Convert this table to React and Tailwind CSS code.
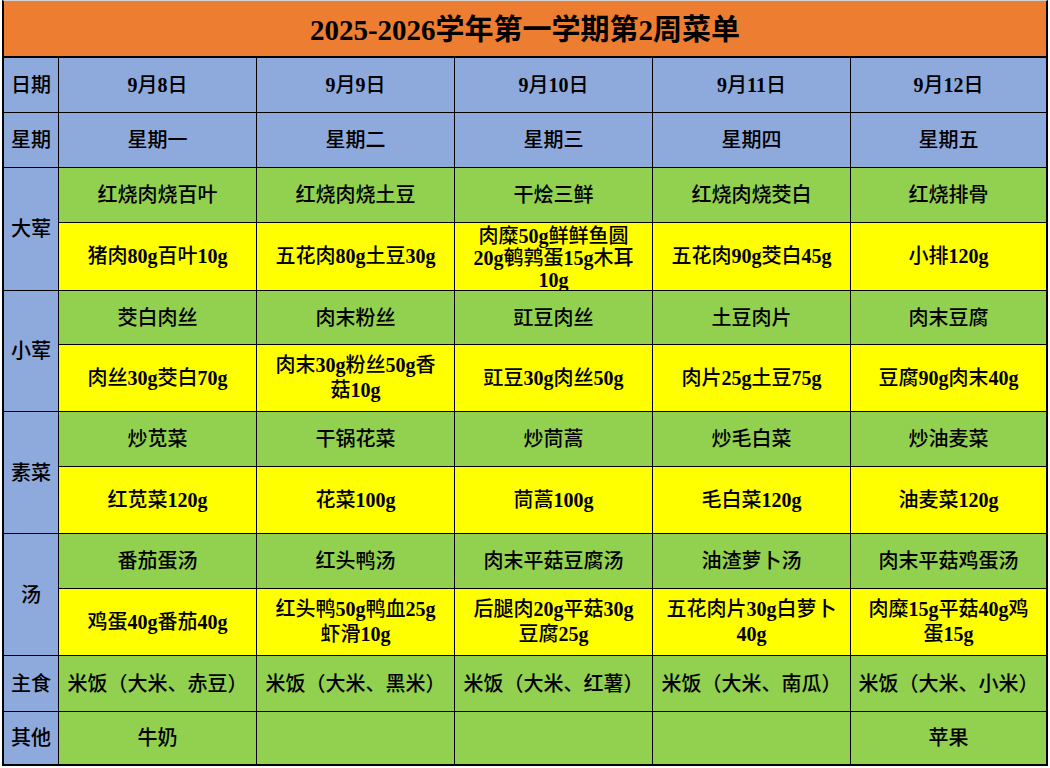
import React from 'react';

const DATES = ['9月8日', '9月9日', '9月10日', '9月11日', '9月12日'];
const WEEKDAYS = ['星期一', '星期二', '星期三', '星期四', '星期五'];

// each group: label + dish row + ingredient row (lines split by "|")
const GROUPS = [
  {
    label: '大荤',
    dishes: ['红烧肉烧百叶', '红烧肉烧土豆', '干烩三鲜', '红烧肉烧茭白', '红烧排骨'],
    items: ['猪肉80g百叶10g', '五花肉80g土豆30g', '肉糜50g鲜鲜鱼圆|20g鹌鹑蛋15g木耳|10g', '五花肉90g茭白45g', '小排120g'],
  },
  {
    label: '小荤',
    dishes: ['茭白肉丝', '肉末粉丝', '豇豆肉丝', '土豆肉片', '肉末豆腐'],
    items: ['肉丝30g茭白70g', '肉末30g粉丝50g香|菇10g', '豇豆30g肉丝50g', '肉片25g土豆75g', '豆腐90g肉末40g'],
  },
  {
    label: '素菜',
    dishes: ['炒苋菜', '干锅花菜', '炒茼蒿', '炒毛白菜', '炒油麦菜'],
    items: ['红苋菜120g', '花菜100g', '茼蒿100g', '毛白菜120g', '油麦菜120g'],
  },
  {
    label: '汤',
    dishes: ['番茄蛋汤', '红头鸭汤', '肉末平菇豆腐汤', '油渣萝卜汤', '肉末平菇鸡蛋汤'],
    items: ['鸡蛋40g番茄40g', '红头鸭50g鸭血25g|虾滑10g', '后腿肉20g平菇30g|豆腐25g', '五花肉片30g白萝卜|40g', '肉糜15g平菇40g鸡|蛋15g'],
  },
];

const STAPLES = ['米饭（大米、赤豆）', '米饭（大米、黑米）', '米饭（大米、红薯）', '米饭（大米、南瓜）', '米饭（大米、小米）'];
const OTHERS = ['牛奶', '', '', '', '苹果'];

// latin runs (numbers, g) are bold serif, chinese stays medium
const Txt = ({ text }) =>
  text.split(/([0-9A-Za-z-]+)/).map((part, i) =>
    /[0-9A-Za-z]/.test(part) ? <span key={i} className="font-bold">{part}</span> : <span key={i}>{part}</span>
  );

const Cell = ({ bg, children, className = '' }) => (
  <div className={`${bg} flex items-center justify-center text-center overflow-hidden ${className}`}>
    <div>{children}</div>
  </div>
);

const Lines = ({ text }) => {
  const lines = text.split('|');
  // three-line cell is squeezed so nothing is cut off
  const lh = lines.length > 2 ? 'leading-[22px] pt-[2px]' : 'leading-[25px]';
  return (
    <div className={lh}>
      {lines.map((line, i) => <div key={i}><Txt text={line} /></div>)}
    </div>
  );
};

export default function App() {
  return (
    <div className="w-[1050px] h-[768px] bg-white text-black font-['Liberation_Serif','Noto_Sans_CJK_SC',serif] font-medium">
      <div className="ml-[2px] w-[1046px] border-t border-t-[#d4d4d4] border-x-2 border-b-2 border-black">
        {/* title */}
        <div className="h-[57px] bg-[#ed7d31] border-b-2 border-black flex items-center justify-center text-[29px] font-semibold pt-1">
          2025-2026学年第一学期第2周菜单
        </div>

        <div className="grid grid-cols-[54px_197px_197px_197px_197px_1fr] grid-rows-[54px_54px_54px_67px_53px_66px_54px_66px_54px_66px_55px_52px] gap-px bg-black text-[20px]">
          <Cell bg="bg-[#8ea9db]">日期</Cell>
          {DATES.map(d => <Cell key={d} bg="bg-[#8ea9db]"><Txt text={d} /></Cell>)}

          <Cell bg="bg-[#8ea9db]">星期</Cell>
          {WEEKDAYS.map(d => <Cell key={d} bg="bg-[#8ea9db]">{d}</Cell>)}

          {GROUPS.map(g => (
            <React.Fragment key={g.label}>
              <Cell bg="bg-[#8ea9db]" className="row-span-2">{g.label}</Cell>
              {g.dishes.map((d, i) => <Cell key={'d' + i} bg="bg-[#92d050]">{d}</Cell>)}
              {g.items.map((t, i) => (
                <Cell key={'i' + i} bg="bg-[#ffff00]"><Lines text={t} /></Cell>
              ))}
            </React.Fragment>
          ))}

          <Cell bg="bg-[#8ea9db]">主食</Cell>
          {STAPLES.map((s, i) => <Cell key={i} bg="bg-[#92d050]" className="whitespace-nowrap">{s}</Cell>)}

          <Cell bg="bg-[#8ea9db]">其他</Cell>
          {OTHERS.map((o, i) => <Cell key={i} bg="bg-[#92d050]">{o}</Cell>)}
        </div>
      </div>
    </div>
  );
}
